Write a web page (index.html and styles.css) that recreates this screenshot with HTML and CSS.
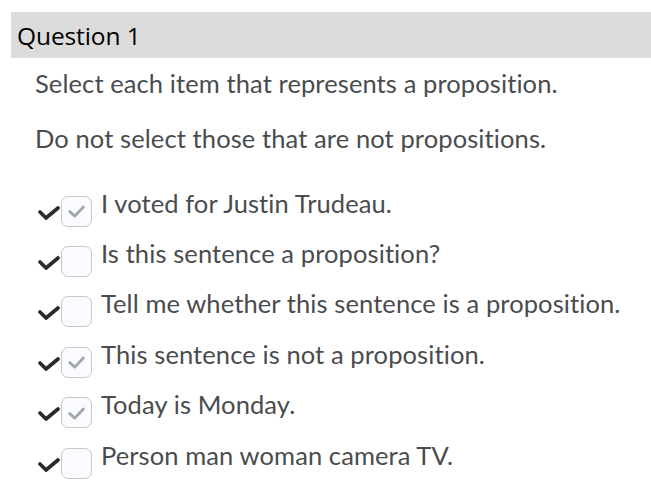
FILE: index.html
```html
<!DOCTYPE html>
<html>
<head>
<meta charset="utf-8">
<link rel="stylesheet" href="styles.css">
</head>
<body>
<div class="question">
  <div class="q-header">Question 1</div>
  <div class="q-body">
    <p class="prompt">Select each item that represents a proposition.</p>
    <p class="prompt">Do not select those that are not propositions.</p>
    <ul class="options">
      <li class="option">
        <svg class="mark" viewBox="0 0 22 14"><path d="M2 6 L8 12 L20 2" /></svg>
        <span class="box checked"><svg viewBox="0 0 18 14"><path d="M3 7.5 L7.5 11.5 L15 3.5"/></svg></span>
        <span class="label">I voted for Justin Trudeau.</span>
      </li>
      <li class="option">
        <svg class="mark" viewBox="0 0 22 14"><path d="M2 6 L8 12 L20 2" /></svg>
        <span class="box"></span>
        <span class="label">Is this sentence a proposition?</span>
      </li>
      <li class="option">
        <svg class="mark" viewBox="0 0 22 14"><path d="M2 6 L8 12 L20 2" /></svg>
        <span class="box"></span>
        <span class="label">Tell me whether this sentence is a proposition.</span>
      </li>
      <li class="option">
        <svg class="mark" viewBox="0 0 22 14"><path d="M2 6 L8 12 L20 2" /></svg>
        <span class="box checked"><svg viewBox="0 0 18 14"><path d="M3 7.5 L7.5 11.5 L15 3.5"/></svg></span>
        <span class="label">This sentence is not a proposition.</span>
      </li>
      <li class="option">
        <svg class="mark" viewBox="0 0 22 14"><path d="M2 6 L8 12 L20 2" /></svg>
        <span class="box checked"><svg viewBox="0 0 18 14"><path d="M3 7.5 L7.5 11.5 L15 3.5"/></svg></span>
        <span class="label">Today is Monday.</span>
      </li>
      <li class="option">
        <svg class="mark" viewBox="0 0 22 14"><path d="M2 6 L8 12 L20 2" /></svg>
        <span class="box"></span>
        <span class="label">Person man woman camera TV.</span>
      </li>
    </ul>
  </div>
</div>
</body>
</html>
```

FILE: styles.css
```css
html, body {
  margin: 0;
  padding: 0;
  background: #ffffff;
}
.question {
  padding: 12px 0 0 11px;
}
.q-header {
  background: #dcdcdc;
  height: 46px;
  box-sizing: border-box;
  padding-left: 6px;
  display: flex;
  align-items: center;
  font-family: "Open Sans", "Liberation Sans", sans-serif;
  font-size: 24.5px;
  font-weight: 500;
  color: #000;
  letter-spacing: -0.1px;
}
.q-body {
  padding: 10px 0 0 24px;
  font-family: Lato, "Liberation Sans", sans-serif;
  color: #494c4e;
  font-variant-ligatures: none;
  letter-spacing: 0.1px;
}
.prompt {
  margin: 0 0 25px 0;
  font-size: 25.5px;
  line-height: 30px;
}
.options {
  list-style: none;
  margin: 0;
  padding: 8px 0 0 0;
}
.option {
  display: flex;
  align-items: center;
  height: 50.4px;
}
.mark {
  width: 22px;
  height: 14px;
  margin: 3px 0 0 3px;
  flex: none;
}
.mark path {
  fill: none;
  stroke: #2a2b2c;
  stroke-width: 3.6;
  stroke-linecap: round;
  stroke-linejoin: round;
}
.box {
  width: 31px;
  height: 31px;
  box-sizing: border-box;
  border: 1px solid #c6c9cc;
  border-radius: 7px;
  background: #f9fbff;
  margin-left: 1px;
  display: flex;
  align-items: center;
  justify-content: center;
  flex: none;
}
.box svg {
  width: 21px;
  height: 16px;
}
.box path {
  fill: none;
  stroke: #a2a5a8;
  stroke-width: 2.4;
  stroke-linecap: round;
  stroke-linejoin: round;
}
.label {
  font-size: 25.5px;
  line-height: 30px;
  margin-left: 9px;
  margin-bottom: 17px;
  white-space: nowrap;
}
```
